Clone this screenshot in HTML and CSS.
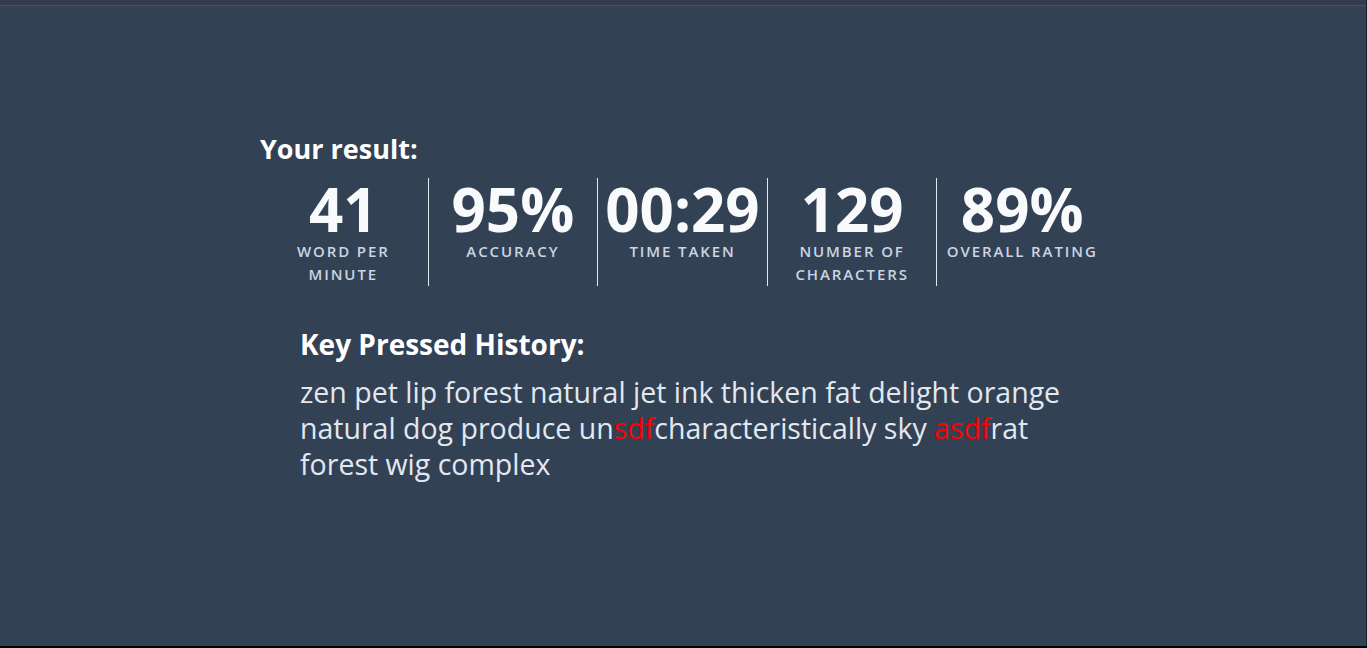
FILE: index.html
```html
<!DOCTYPE html>
<html lang="en">
<head>
<meta charset="utf-8">
<title>Typing result</title>
<link rel="stylesheet" href="styles.css">
</head>
<body>
<div class="frame">
  <div class="topbar"></div>
  <main class="result">
    <h2 class="result-title">Your result:</h2>
    <div class="stats">
      <div class="stat">
        <div class="stat-value">41</div>
        <div class="stat-label">Word per<br>minute</div>
      </div>
      <div class="stat">
        <div class="stat-value">95%</div>
        <div class="stat-label">Accuracy</div>
      </div>
      <div class="stat">
        <div class="stat-value">00:29</div>
        <div class="stat-label">Time taken</div>
      </div>
      <div class="stat">
        <div class="stat-value">129</div>
        <div class="stat-label">Number of<br>characters</div>
      </div>
      <div class="stat">
        <div class="stat-value">89%</div>
        <div class="stat-label">Overall rating</div>
      </div>
    </div>
    <section class="history">
      <h3 class="history-title">Key Pressed History:</h3>
      <p class="history-text">zen pet lip forest natural jet ink thicken fat delight orange natural dog produce un<span class="wrong">sdf</span>characteristically sky <span class="wrong">asdf</span>rat forest wig complex</p>
    </section>
  </main>
</div>
</body>
</html>
```

FILE: styles.css
```css
html, body {
  margin: 0;
  padding: 0;
  background: #000;
}
.frame {
  box-sizing: border-box;
  height: 648px;
  background: #334155;
  border-right: 1px solid #1c2230;
  border-bottom: 2px solid #000;
  font-family: "Open Sans", "Noto Sans", sans-serif;
  color: #f8fafc;
}
.topbar {
  height: 5px;
  background: #343b4c;
  border-bottom: 1px solid #4a5162;
}
.result {
  width: 848px;
  margin: 0 auto;
  padding-top: 127px;
}
.result-title {
  margin: 0 0 13px 1px;
  font-size: 27px;
  line-height: 32px;
  font-weight: 700;
  color: #ffffff;
}
.stats {
  display: grid;
  grid-template-columns: repeat(5, 1fr);
}
.stat {
  display: flex;
  flex-direction: column;
  align-items: center;
  text-align: center;
  border-right: 1px solid #e2e8f0;
  height: 108px;
}
.stat:last-child {
  border-right: none;
}
.stat-value {
  font-size: 60px;
  line-height: 61px;
  padding-top: 1px;
  font-weight: 700;
  color: #f8fafc;
}
.stat-label {
  font-size: 15px;
  line-height: 23px;
  font-weight: 600;
  text-transform: uppercase;
  letter-spacing: 1.9px;
  color: #cbd5e1;
}
.history {
  padding: 42px 41px 0;
}
.history-title {
  margin: 0 0 14px;
  font-size: 28px;
  line-height: 32px;
  font-weight: 700;
  color: #ffffff;
}
.history-text {
  margin: 0;
  font-size: 28.5px;
  line-height: 36px;
  color: #e2e8f0;
}
.wrong {
  color: #ff0000;
}
```
